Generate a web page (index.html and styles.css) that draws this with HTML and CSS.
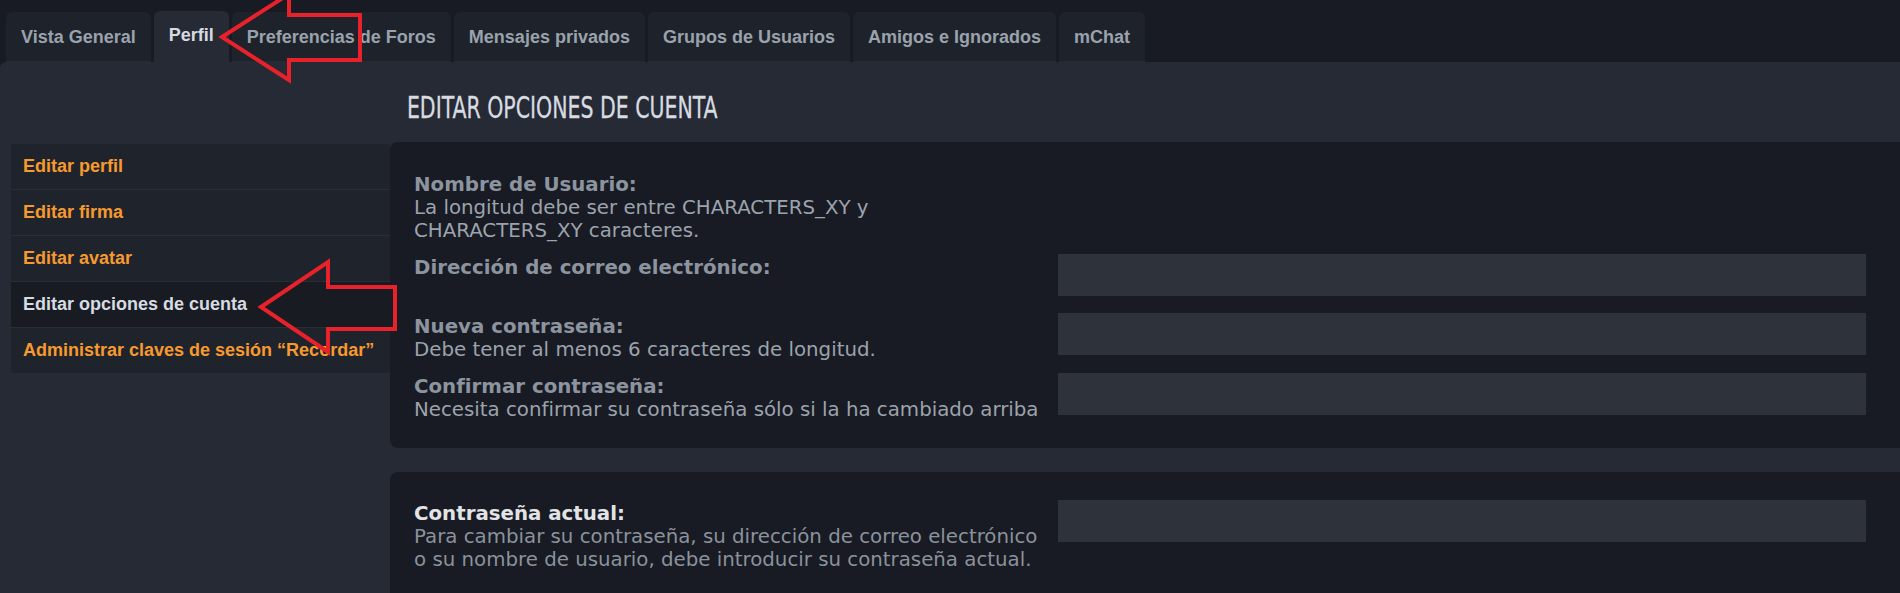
FILE: index.html
```html
<!DOCTYPE html>
<html lang="es">
<head>
<meta charset="utf-8">
<title>Panel de Control de Usuario</title>
<link rel="stylesheet" href="styles.css">
</head>
<body>
<div class="page">
  <nav class="tabs">
    <a class="tab">Vista General</a>
    <a class="tab tab-active">Perfil</a>
    <a class="tab">Preferencias de Foros</a>
    <a class="tab">Mensajes privados</a>
    <a class="tab">Grupos de Usuarios</a>
    <a class="tab">Amigos e Ignorados</a>
    <a class="tab">mChat</a>
  </nav>
  <div class="content">
    <aside class="sidebar">
      <ul class="menu">
        <li class="menu-item">Editar perfil</li>
        <li class="menu-item">Editar firma</li>
        <li class="menu-item">Editar avatar</li>
        <li class="menu-item menu-active">Editar opciones de cuenta</li>
        <li class="menu-item">Administrar claves de sesión “Recordar”</li>
      </ul>
    </aside>
    <main class="main">
      <h2 class="heading">EDITAR OPCIONES DE CUENTA</h2>
      <section class="panel">
        <div class="row">
          <div class="label">
            <div class="label-title">Nombre de Usuario:</div>
            <div class="label-explain">La longitud debe ser entre CHARACTERS_XY y<br>CHARACTERS_XY caracteres.</div>
          </div>
          <div class="field"></div>
        </div>
        <div class="row">
          <div class="label">
            <div class="label-title">Dirección de correo electrónico:</div>
          </div>
          <div class="field"><div class="input"></div></div>
        </div>
        <div class="row">
          <div class="label">
            <div class="label-title">Nueva contraseña:</div>
            <div class="label-explain">Debe tener al menos 6 caracteres de longitud.</div>
          </div>
          <div class="field"><div class="input"></div></div>
        </div>
        <div class="row">
          <div class="label">
            <div class="label-title">Confirmar contraseña:</div>
            <div class="label-explain">Necesita confirmar su contraseña sólo si la ha cambiado arriba</div>
          </div>
          <div class="field"><div class="input"></div></div>
        </div>
      </section>
      <section class="panel panel-second">
        <div class="row">
          <div class="label">
            <div class="label-title label-strong">Contraseña actual:</div>
            <div class="label-explain label-dim">Para cambiar su contraseña, su dirección de correo electrónico<br>o su nombre de usuario, debe introducir su contraseña actual.</div>
          </div>
          <div class="field"><div class="input"></div></div>
        </div>
      </section>
    </main>
  </div>
  <svg class="annotations" width="1900" height="593" viewBox="0 0 1900 593">
    <polygon points="222,37 289,-6 289,15 360,15 360,60 289,60 289,80" />
    <polygon points="261,307 328,262 328,287 395,287 395,329 328,329 328,352" />
  </svg>
</div>
</body>
</html>
```

FILE: styles.css
```css
* { box-sizing: border-box; }

html, body {
  margin: 0;
  padding: 0;
  background: #181b23;
}

body {
  width: 1900px;
  height: 593px;
  overflow: hidden;
  font-family: "Liberation Sans", Arial, sans-serif;
}

.page {
  position: relative;
  width: 1900px;
  height: 593px;
  display: flex;
  flex-direction: column;
  overflow: hidden;
}

/* ---------- tabs ---------- */
.tabs {
  display: flex;
  align-items: flex-end;
  gap: 3px;
  padding: 0 0 0 6px;
  height: 62px;
  flex: none;
}

.tab {
  display: block;
  height: 50px;
  line-height: 50px;
  padding: 0 15px;
  background: #1e222a;
  color: #9aa2ad;
  font-size: 18px;
  font-weight: bold;
  border-radius: 6px 6px 0 0;
  white-space: nowrap;
  border-bottom: 1px solid #262a34;
}

.tab-active {
  height: 51px;
  line-height: 49px;
  background: #252a35;
  color: #d6dae0;
  border-bottom: none;
}

/* ---------- content ---------- */
.content {
  flex: 1;
  display: flex;
  align-items: stretch;
  background: #252a35;
  border-radius: 6px 0 0 0;
  padding-left: 11px;
  min-height: 0;
  overflow: hidden;
}

.sidebar {
  width: 379px;
  flex: none;
  align-self: flex-start;
  padding-top: 82px;
}

.menu {
  list-style: none;
  margin: 0;
  padding: 0;
  display: flex;
  flex-direction: column;
  gap: 1px;
  background: #292d37;
}

.menu-item {
  height: 45px;
  line-height: 45px;
  padding-left: 12px;
  background: #1f232c;
  color: #f6992f;
  font-size: 18px;
  font-weight: bold;
  white-space: nowrap;
}

.menu-active {
  background: #181b22;
  color: #d7dbe2;
}

.main {
  flex: 1;
  min-width: 0;
  display: flex;
  flex-direction: column;
}

.heading {
  margin: 0;
  padding: 28px 0 0 23px;
  height: 80px;
  flex: none;
  line-height: 34px;
  font-family: "Liberation Sans Narrow", "DejaVu Sans Condensed", "Liberation Sans", sans-serif;
  font-stretch: condensed;
  font-weight: normal;
  font-size: 31px;
  color: #d8dbe0;
  -webkit-text-stroke: 0.3px #d8dbe0;
  white-space: nowrap;
  transform: scaleX(0.735);
  transform-origin: left center;
}

/* ---------- form panels ---------- */
.panel {
  flex: none;
  background: #181b23;
  border-radius: 8px 0 0 8px;
  padding: 29px 34px 15px 24px;
  font-family: "DejaVu Sans", Verdana, sans-serif;
  font-size: 19.8px;
  line-height: 23px;
}

.panel-second {
  flex: 1;
  margin-top: 24px;
  padding-top: 28px;
  padding-bottom: 0;
  border-radius: 8px 0 0 0;
  overflow: hidden;
}

.row {
  display: flex;
  align-items: flex-start;
  margin-bottom: 12px;
}

.label {
  width: 644px;
  flex: none;
  padding-top: 2px;
}

.label-title {
  font-weight: bold;
  color: #8c949f;
  white-space: nowrap;
}

.label-explain {
  color: #9ca3ad;
  white-space: nowrap;
}

.label-strong {
  color: #e2e3e5;
}

.label-dim {
  color: #8b929c;
}

.field {
  flex: 1;
}

.input {
  height: 42px;
  margin-bottom: 5px;
  background: #2e323b;
}

/* ---------- annotation arrows ---------- */
.annotations {
  position: absolute;
  left: 0;
  top: 0;
  pointer-events: none;
}

.annotations polygon {
  fill: none;
  stroke: #e8212b;
  stroke-width: 4;
  stroke-linejoin: miter;
}
```
